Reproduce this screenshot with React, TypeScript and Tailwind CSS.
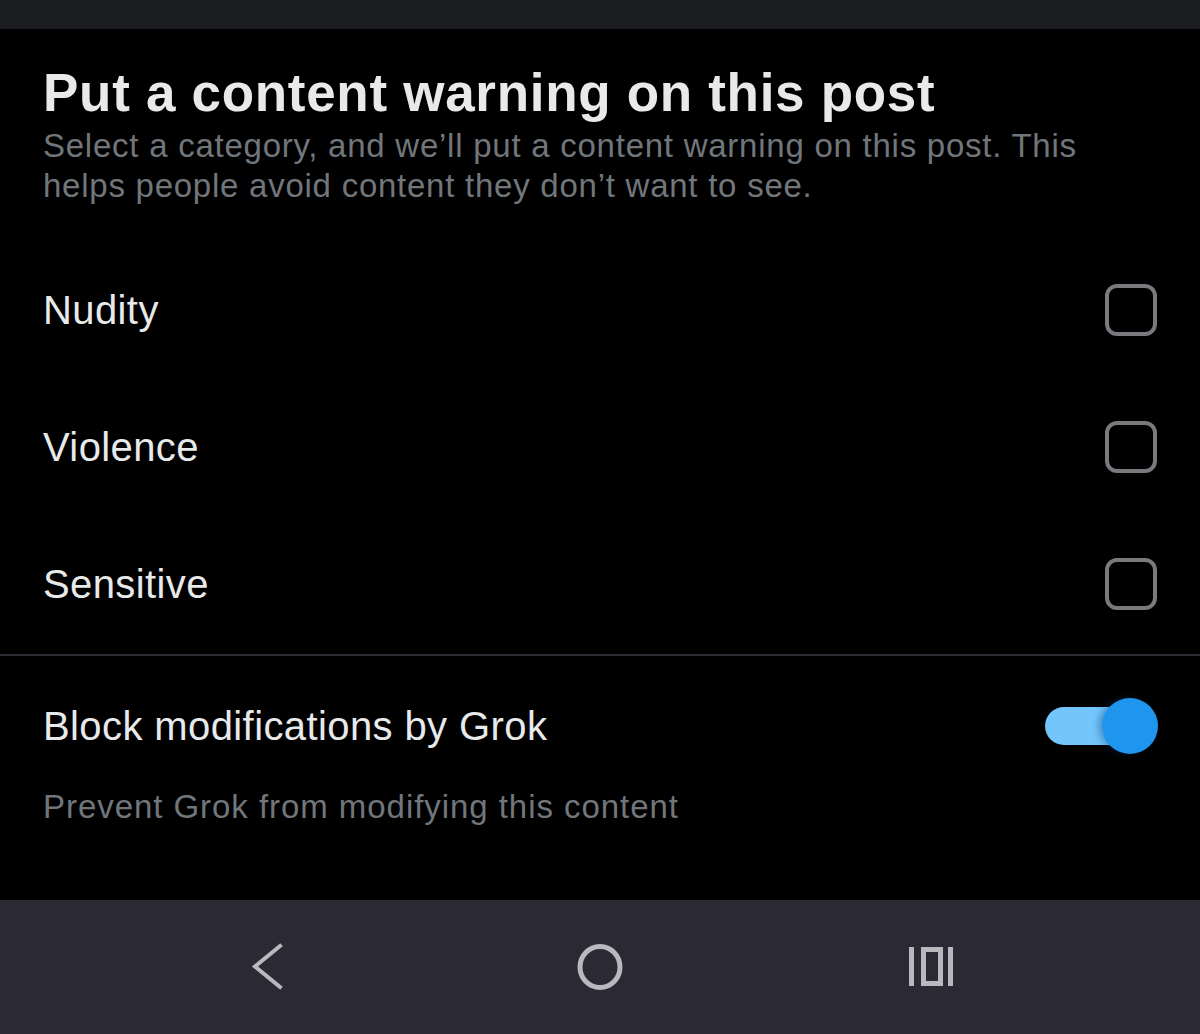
const FONT = "font-['Liberation_Sans',Arial,sans-serif]";

const CATEGORIES = ["Nudity", "Violence", "Sensitive"];

export default function App() {
  return (
    <div className={`flex h-[1034px] w-[1200px] flex-col overflow-hidden bg-black ${FONT}`}>
      <div className="h-[29px] shrink-0 bg-[#1c1d21]" />
      <main className="flex-1">
        <Header />
        <div className="mt-[35px]">
          {CATEGORIES.map((c) => (
            <CategoryRow key={c} label={c} />
          ))}
        </div>
        <div className="mt-[2px] h-[2px] bg-[#2a2d31]" />
        <GrokSetting />
      </main>
      <NavBar />
    </div>
  );
}

function Header() {
  return (
    <div className="px-[43px] pt-[36px]">
      <h1 className="text-[53px] font-bold leading-[56px] tracking-[0.7px] text-[#e7e9ea]">
        Put a content warning on this post
      </h1>
      <p className="mt-[5px] text-[33px] leading-[40px] tracking-[0.75px] text-[#71767b]">
        Select a category, and we’ll put a content warning on this post. This
        <br />
        helps people avoid content they don’t want to see.
      </p>
    </div>
  );
}

function CategoryRow({ label }: { label: string }) {
  return (
    <div className="flex h-[137px] items-center justify-between pl-[43px] pr-[43px]">
      <span className="text-[40px] leading-[48px] tracking-[0.4px] text-[#e7e9ea]">{label}</span>
      <span className="h-[52px] w-[52px] rounded-[12px] border-[4px] border-[#787a7d]" />
    </div>
  );
}

function GrokSetting() {
  return (
    <div className="px-[43px]">
      <div className="mt-[20px] flex h-[100px] items-center justify-between">
        <span className="text-[40px] leading-[48px] tracking-[0.4px] text-[#e7e9ea]">
          Block modifications by Grok
        </span>
        <div className="relative -mr-px h-[56px] w-[113px]">
          <div className="absolute left-0 top-[9px] h-[38px] w-[100px] rounded-full bg-[#72c6fc]" />
          <div className="absolute right-0 top-0 h-[56px] w-[56px] rounded-full bg-[#1e96ee] shadow-[-4px_0_6px_rgba(10,60,110,0.35)]" />
        </div>
      </div>
      <p className="mt-[11px] text-[33px] leading-[40px] tracking-[0.95px] text-[#71767b]">
        Prevent Grok from modifying this content
      </p>
    </div>
  );
}

function NavBar() {
  return (
    <nav className="flex h-[134px] shrink-0 items-center justify-center gap-[272px] bg-[#2b2a34]">
      <div className="flex w-[60px] justify-center">
        <svg width="36" height="48" viewBox="0 0 36 48" fill="none">
          <path d="M30 3 L5 23.5 L30 44" stroke="#b9b9bd" strokeWidth="4" strokeLinecap="square" strokeLinejoin="miter" />
        </svg>
      </div>
      <div className="flex w-[60px] justify-center">
        <svg width="48" height="48" viewBox="0 0 48 48" fill="none">
          <ellipse cx="24" cy="24" rx="20" ry="20.5" stroke="#b9b9bd" strokeWidth="5" />
        </svg>
      </div>
      <div className="flex w-[60px] justify-center">
        <svg width="46" height="40" viewBox="0 0 46 40" fill="none">
          <rect x="0" y="0" width="5" height="39" fill="#b9b9bd" />
          <rect x="14.5" y="2.5" width="17" height="34" stroke="#b9b9bd" strokeWidth="5" />
          <rect x="39" y="0" width="5" height="39" fill="#b9b9bd" />
        </svg>
      </div>
    </nav>
  );
}
